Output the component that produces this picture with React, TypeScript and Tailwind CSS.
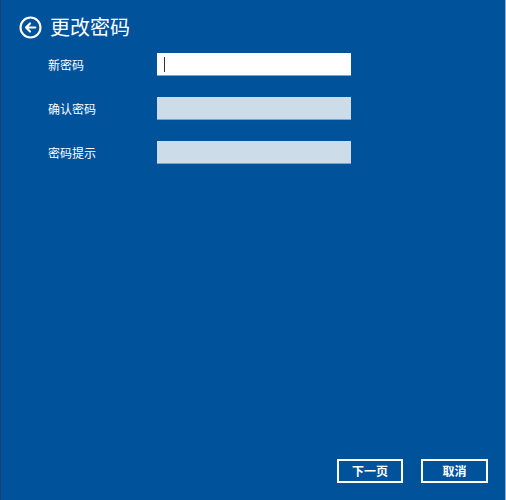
import React from "react";

const font = { fontFamily: '"Microsoft YaHei", "Noto Sans CJK SC", sans-serif' };

export default function App() {
  return (
    <div
      className="w-[506px] h-[500px] bg-[#00529b] flex flex-col border-l border-[#1a3f6a] border-r border-r-[#8fb0d0] text-white"
      style={font}
    >
      <div className="flex items-center h-[22px] mt-[16px] pl-[18px] gap-[8px]">
        <svg width="23" height="23" viewBox="0 0 24 24" fill="none" stroke="white" strokeWidth="2.2">
          <circle cx="12" cy="12" r="10.4" />
          <path d="M17 12H7.5M11.5 7.8L7.3 12l4.2 4.2" strokeLinecap="round" strokeLinejoin="round" />
        </svg>
        <span className="text-[20px] leading-none">更改密码</span>
      </div>
      <div className="flex flex-col gap-[21px] mt-[15px] pl-[47px]">
        <div className="flex items-center h-[23px]">
          <span className="w-[109px] text-[12px] leading-none">新密码</span>
          <div className="w-[194px] h-[23px] bg-white border-b border-[#7fa4c8] flex items-center pl-[7px]">
            <div className="w-px h-[15px] bg-[#333]" />
          </div>
        </div>
        <div className="flex items-center h-[23px]">
          <span className="w-[109px] text-[12px] leading-none">确认密码</span>
          <div className="w-[194px] h-[23px] bg-[#ccdce8] border-b border-[#7fa4c8]" />
        </div>
        <div className="flex items-center h-[23px]">
          <span className="w-[109px] text-[12px] leading-none">密码提示</span>
          <div className="w-[194px] h-[23px] bg-[#ccdce8] border-b border-[#7fa4c8]" />
        </div>
      </div>
      <div className="flex-1" />
      <div className="flex justify-end gap-[18px] pr-[17px] mb-[17px]">
        <button className="w-[66px] h-[24px] border-2 border-white text-[12px] font-bold leading-none flex items-center justify-center">
          下一页
        </button>
        <button className="w-[67px] h-[24px] border-2 border-white text-[12px] font-bold leading-none flex items-center justify-center">
          取消
        </button>
      </div>
    </div>
  );
}
